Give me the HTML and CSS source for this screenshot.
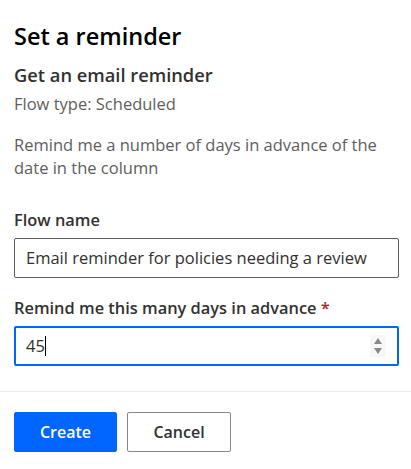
FILE: index.html
```html
<!DOCTYPE html>
<html lang="en">
<head>
<meta charset="utf-8">
<title>Set a reminder</title>
<link rel="stylesheet" href="styles.css">
</head>
<body>
<div class="panel">
  <h1 class="title">Set a reminder</h1>
  <h2 class="subtitle">Get an email reminder</h2>
  <p class="meta">Flow type: Scheduled</p>
  <p class="desc">Remind me a number of days in advance of the date in the column</p>
  <div class="field field-first">
    <label class="label">Flow name</label>
    <div class="input">Email reminder for policies needing a review</div>
  </div>
  <div class="field">
    <label class="label">Remind me this many days in advance <span class="req">*</span></label>
    <div class="input input-focus">
      <span class="value">45<span class="caret"></span></span>
      <span class="spin">
        <svg width="14" height="22" viewBox="0 0 14 22"><path d="M7 3 L11 9 L3 9 Z" fill="#8a8886"/><path d="M3 13 L11 13 L7 19 Z" fill="#8a8886"/></svg>
      </span>
    </div>
  </div>
</div>
<div class="footer">
  <button class="btn btn-primary">Create</button>
  <button class="btn btn-default">Cancel</button>
</div>
</body>
</html>
```

FILE: styles.css
```css
* { box-sizing: border-box; }
html, body { margin: 0; padding: 0; background: #fff; }
body {
  font-family: "Segoe UI", "Open Sans", "Noto Sans", sans-serif;
  color: #323130;
  width: 411px;
}
.panel {
  padding: 20px 12px 0 14px;
  display: flex;
  flex-direction: column;
}
.title {
  margin: 0;
  font-size: 23.5px;
  line-height: 32px;
  font-weight: 600;
  color: #000;
}
.subtitle {
  margin: 11px 0 0;
  font-size: 18.3px;
  line-height: 24px;
  font-weight: 600;
  color: #323130;
}
.meta {
  margin: 6px 0 0;
  font-size: 16.5px;
  line-height: 22px;
  color: #605e5c;
}
.desc {
  margin: 18px 0 0;
  font-size: 16.5px;
  line-height: 23px;
  color: #605e5c;
}
.field {
  display: flex;
  flex-direction: column;
  gap: 7px;
  margin-top: 19px;
}
.field-first { margin-top: 30px; }
.label {
  font-size: 16.4px;
  line-height: 22px;
  font-weight: 600;
  color: #323130;
}
.req { color: #a4262c; }
.input {
  height: 40px;
  border: 1px solid #605e5c;
  border-radius: 2px;
  padding: 0 11px;
  font-size: 16.5px;
  line-height: 38px;
  color: #323130;
  display: flex;
  align-items: center;
  white-space: nowrap;
}
.input-focus {
  border: 2px solid #0066ff;
  padding: 0 10px 0 10px;
  line-height: 36px;
}
.value { flex: 1; display: flex; align-items: center; }
.caret {
  display: inline-block;
  width: 1px;
  height: 20px;
  background: #000;
  margin-left: 0;
}
.spin {
  width: 16px;
  height: 22px;
  background: #f7f7f7;
  display: flex;
  align-items: center;
  justify-content: center;
  margin-right: 1px;
}
.spin svg { display: block; }
.footer {
  margin-top: 25px;
  border-top: 1px solid #edebe9;
  padding: 20px 14px 0;
  display: flex;
  gap: 10px;
}
.btn {
  height: 40px;
  width: 103px;
  border-radius: 2px;
  font-family: inherit;
  font-size: 16px;
  font-weight: 600;
  padding: 0;
  cursor: pointer;
}
.btn-primary {
  background: #0066ff;
  border: 1px solid #0066ff;
  color: #fff;
}
.btn-default {
  width: 104px;
  background: #fff;
  border: 1px solid #8a8886;
  color: #323130;
}
```
